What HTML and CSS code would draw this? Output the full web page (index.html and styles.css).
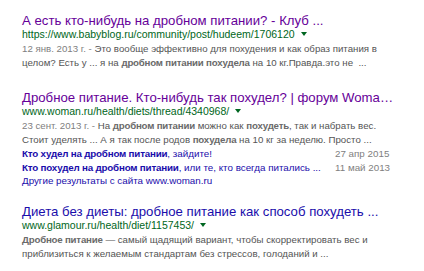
FILE: index.html
```html
<!DOCTYPE html>
<html lang="ru">
<head>
    <meta charset="UTF-8">
    <link rel="stylesheet" href="styles.css">
</head>
<body>
    <div class="results">
        <div class="result">
            <a class="title visited" href="#">А есть кто-нибудь на дробном питании? - Клуб ...</a>
            <div class="url">https://www.babyblog.ru/community/post/hudeem/1706120<span class="arrow"></span></div>
            <div class="snippet"><span class="date">12 янв. 2013 г. - </span>Это вообще эффективно для похудения и как образ питания в<br>целом? Есть у ... я на <b>дробном питании похудела</b> на 10 кг.Правда.это не &nbsp;...</div>
        </div>
        <div class="result">
            <a class="title visited" href="#">Дробное питание. Кто-нибудь так похудел? | форум Woma…</a>
            <div class="url">www.woman.ru/health/diets/thread/4340968/<span class="arrow"></span></div>
            <div class="snippet"><span class="date">23 сент. 2013 г. - </span>На <b>дробном питании</b> можно как <b>похудеть</b>, так и набрать вес.<br>Стоит уделять ... А я так после родов <b>похудела</b> на 10 кг за неделю. Просто ...</div>
            <div class="sublinks">
                <div class="sublink">
                    <a href="#"><b>Кто худел на дробном питании</b>, зайдите!</a>
                    <span class="subdate">27 апр 2015</span>
                </div>
                <div class="sublink">
                    <a href="#"><b>Кто похудел на дробном питании</b>, или те, кто всегда питались ...</a>
                    <span class="subdate">11 май 2013</span>
                </div>
                <a class="more" href="#">Другие результаты с сайта www.woman.ru</a>
            </div>
        </div>
        <div class="result">
            <a class="title" href="#">Диета без диеты: дробное питание как способ похудеть ...</a>
            <div class="url">www.glamour.ru/health/diet/1157453/<span class="arrow"></span></div>
            <div class="snippet"><b>Дробное питание</b> — самый щадящий вариант, чтобы скорректировать вес и<br>приблизиться к желаемым стандартам без стрессов, голоданий и ...</div>
        </div>
    </div>
</body>
</html>
```

FILE: styles.css
```css
body {
    margin: 0;
    padding: 14px 0 0 22px;
    background-color: #fff;
    font-family: 'Liberation Sans', Arial, sans-serif;
}

a {
    text-decoration: none;
}

.results {
    display: flex;
    flex-direction: column;
    gap: 21px;
}

.result {
    display: flex;
    flex-direction: column;
}

.title {
    font-size: 13.2px;
    line-height: 14px;
    color: #1a0dab;
    white-space: nowrap;
}

.title.visited {
    color: #660099;
}

.url {
    font-size: 10.5px;
    line-height: 12px;
    color: #006621;
    display: flex;
    align-items: center;
}

.arrow {
    margin-left: 6px;
    border-left: 3px solid transparent;
    border-right: 3px solid transparent;
    border-top: 4px solid #006621;
}

.snippet {
    margin-top: 2px;
    font-size: 9.7px;
    line-height: 14px;
    color: #545454;
    white-space: nowrap;
}

.snippet b {
    color: #6a6a6a;
    letter-spacing: -0.2px;
}

.date {
    color: #808080;
}

.sublinks {
    margin-bottom: -4px;
    display: flex;
    flex-direction: column;
    font-size: 9.8px;
    line-height: 13.5px;
}

.sublinks b {
    letter-spacing: -0.2px;
}

.sublink {
    display: flex;
    width: 366px;
    justify-content: space-between;
    white-space: nowrap;
}

.sublink a, .more {
    color: #1a0dab;
}

.subdate {
    flex-shrink: 0;
    color: #808080;
    width: 53px;
}
```
